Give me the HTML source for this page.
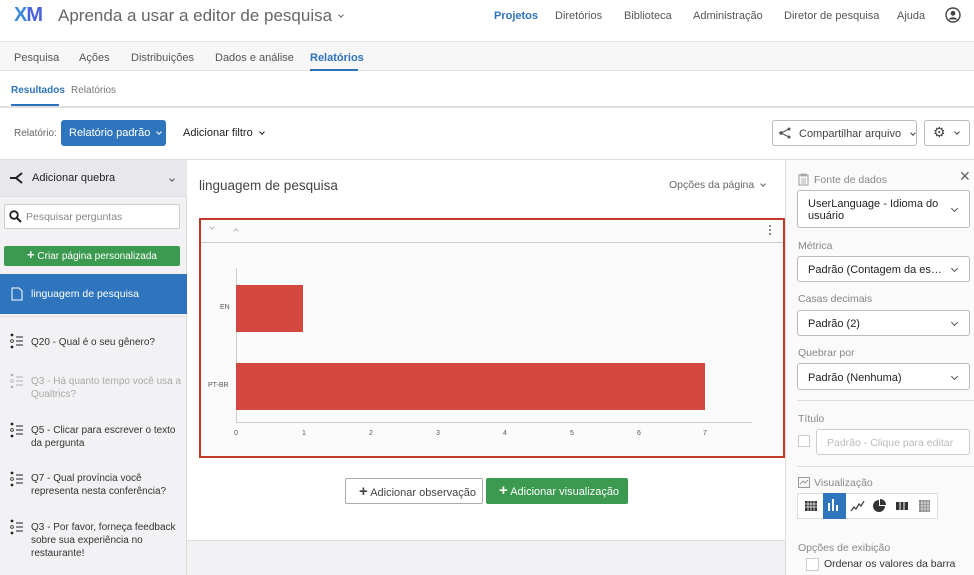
<!DOCTYPE html>
<html><head><meta charset="utf-8"><style>
*{box-sizing:border-box;margin:0;padding:0}
body{width:974px;height:575px;overflow:hidden;position:relative;background:#fff;font-family:"Liberation Sans",sans-serif;color:#333}
.a{position:absolute;white-space:nowrap}
.cv{display:inline-block;width:5px;height:5px;border-right:1px solid currentColor;border-bottom:1px solid currentColor;transform:rotate(45deg);margin:0 2px 3px 7px;vertical-align:middle}
.sel{position:absolute;left:797px;width:173px;border:1px solid #bbb;border-radius:3px;background:#fff;font-size:11px;color:#222;padding:0 10px;white-space:nowrap;overflow:hidden}
.chev{position:absolute;right:12px;width:5px;height:5px;border-right:1px solid #555;border-bottom:1px solid #555;transform:rotate(45deg)}
.lbl{position:absolute;left:798px;font-size:10.5px;color:#888}
.qi{position:absolute;left:10px;width:14px;height:18px}
.qt{position:absolute;left:31px;font-size:10px;line-height:13px;color:#333}
</style></head><body>
<!-- top bar -->
<div class="a" style="left:14px;top:4px;font-size:20px;font-weight:bold;letter-spacing:-1px;color:#3a8ad8">X<span style="color:#4a64e0">M</span></div>
<div class="a" style="left:58px;top:6px;font-size:17px;color:#666">Aprenda a usar a editor de pesquisa<span class="cv" style="width:4px;height:4px"></span></div>
<div class="a" style="left:494px;top:10px;font-size:11px;color:#2d73bb;font-weight:bold">Projetos</div>
<div class="a" style="left:555px;top:10px;font-size:11px;color:#555">Diretórios</div>
<div class="a" style="left:624px;top:10px;font-size:11px;color:#555">Biblioteca</div>
<div class="a" style="left:693px;top:10px;font-size:11px;color:#555">Administração</div>
<div class="a" style="left:784px;top:10px;font-size:11px;color:#555">Diretor de pesquisa</div>
<div class="a" style="left:897px;top:10px;font-size:11px;color:#555">Ajuda</div>
<svg class="a" style="left:945px;top:7px" width="16" height="16" viewBox="0 0 16 16"><circle cx="8" cy="8" r="7" fill="none" stroke="#444" stroke-width="1.4"/><circle cx="8" cy="6.3" r="2.4" fill="#444"/><path d="M3.5 12.5c1.5-3 7.5-3 9 0" fill="#444"/></svg>
<!-- tab bar -->
<div class="a" style="left:0;top:41px;width:974px;height:30px;background:#f7f7f7;border-top:1px solid #e6e6e6;border-bottom:1px solid #e3e3e3"></div>
<div class="a" style="left:14px;top:52px;font-size:11px;color:#555">Pesquisa</div>
<div class="a" style="left:79px;top:52px;font-size:11px;color:#555">Ações</div>
<div class="a" style="left:131px;top:52px;font-size:11px;color:#555">Distribuições</div>
<div class="a" style="left:215px;top:52px;font-size:11px;color:#555">Dados e análise</div>
<div class="a" style="left:310px;top:52px;font-size:11px;color:#2d73bb;font-weight:bold">Relatórios</div>
<div class="a" style="left:310px;top:69px;width:48px;height:2px;background:#2d73bb"></div>
<!-- subtabs -->
<div class="a" style="left:11px;top:85px;font-size:10px;color:#2d73bb;font-weight:bold">Resultados</div>
<div class="a" style="left:11px;top:104px;width:48px;height:2px;background:#2d73bb"></div>
<div class="a" style="left:71px;top:85px;font-size:10px;color:#777">Relatórios</div>
<div class="a" style="left:0;top:106px;width:974px;height:2px;background:#e0e0e0"></div>
<!-- toolbar -->
<div class="a" style="left:14px;top:128px;font-size:10px;color:#666">Relatório:</div>
<div class="a" style="left:61px;top:120px;width:105px;height:26px;background:#2e75bd;border-radius:3px;color:#fff;font-size:11px;padding:7px 0 0 8px">Relatório padrão<span class="cv" style="width:4px;height:4px"></span></div>
<div class="a" style="left:183px;top:127px;font-size:11px;color:#222">Adicionar filtro<span class="cv" style="width:4px;height:4px"></span></div>
<div class="a" style="left:772px;top:120px;width:145px;height:26px;border:1px solid #bbb;border-radius:3px;font-size:11px;color:#444;padding:7px 0 0 26px">Compartilhar arquivo<span class="cv" style="width:4px;height:4px;margin-left:10px"></span></div>
<svg class="a" style="left:779px;top:127px" width="12" height="12" viewBox="0 0 12 12"><circle cx="2" cy="6" r="1.8" fill="#555"/><circle cx="10" cy="2" r="1.5" fill="#555"/><circle cx="10" cy="10" r="1.5" fill="#555"/><path d="M2 6L10 2M2 6L10 10" stroke="#555"/></svg>
<div class="a" style="left:924px;top:120px;width:46px;height:26px;border:1px solid #bbb;border-radius:3px;font-size:14px;color:#444;padding:3px 0 0 8px">⚙<span class="cv" style="width:4px;height:4px;margin-left:9px"></span></div>
<div class="a" style="left:0;top:159px;width:974px;height:1px;background:#ddd"></div>
<!-- left sidebar -->
<div class="a" style="left:0;top:160px;width:187px;height:415px;background:#f2f2f5;border-right:1px solid #ddd"></div>
<div class="a" style="left:0;top:160px;width:187px;height:37px;background:#e8e8ec;border-bottom:1px solid #ddd"></div>
<svg class="a" style="left:9px;top:171px" width="16" height="14" viewBox="0 0 16 14"><path d="M1 7h6M7 7L13 2M7 7L13 12" stroke="#222" stroke-width="2" fill="none"/></svg>
<div class="a" style="left:32px;top:172px;font-size:11px;color:#222">Adicionar quebra</div>
<div class="a" style="left:163px;top:172px;color:#555"><span class="cv" style="width:4px;height:4px"></span></div>
<div class="a" style="left:4px;top:204px;width:176px;height:25px;background:#fff;border:1px solid #ccc;border-radius:2px"></div>
<svg class="a" style="left:9px;top:210px" width="13" height="13" viewBox="0 0 13 13"><circle cx="5" cy="5" r="3.8" fill="none" stroke="#222" stroke-width="1.8"/><path d="M8 8l4 4" stroke="#222" stroke-width="2"/></svg>
<div class="a" style="left:26px;top:211px;font-size:10.5px;color:#888">Pesquisar perguntas</div>
<div class="a" style="left:4px;top:246px;width:176px;height:20px;background:#3b9a4f;border-radius:2px;color:#fff;font-size:10px;text-align:center;padding-top:4px"><b style="font-size:13px;line-height:10px">+</b> Criar página personalizada</div>
<div class="a" style="left:0;top:274px;width:187px;height:40px;background:#2e75bd"></div>
<svg class="a" style="left:11px;top:287px" width="12" height="14" viewBox="0 0 12 14"><path d="M1 1h7l3 3v9H1z" fill="none" stroke="#fff"/></svg>
<div class="a" style="left:31px;top:288px;font-size:10.5px;color:#fff">linguagem de pesquisa</div>
<div class="a" style="left:0;top:316px;width:187px;height:1px;background:#ddd"></div>
<svg class="qi" style="top:333px" viewBox="0 0 14 18"><circle cx="2" cy="2" r="1.4" fill="#222"/><circle cx="2" cy="8" r="1.4" fill="none" stroke="#222" stroke-width=".8"/><circle cx="2" cy="14" r="1.4" fill="#222"/><path d="M6 4h7M6 8h7M6 12h7" stroke="#222" stroke-width=".9"/></svg>
<div class="qt" style="top:336px">Q20 - Qual é o seu gênero?</div>
<svg class="qi" style="top:373px;opacity:.3" viewBox="0 0 14 18"><circle cx="2" cy="2" r="1.4" fill="#222"/><circle cx="2" cy="8" r="1.4" fill="none" stroke="#222" stroke-width=".8"/><circle cx="2" cy="14" r="1.4" fill="#222"/><path d="M6 4h7M6 8h7M6 12h7" stroke="#222" stroke-width=".9"/></svg>
<div class="qt" style="top:375px;color:#aaa">Q3 - Há quanto tempo você usa a<br>Qualtrics?</div>
<svg class="qi" style="top:422px" viewBox="0 0 14 18"><circle cx="2" cy="2" r="1.4" fill="#222"/><circle cx="2" cy="8" r="1.4" fill="none" stroke="#222" stroke-width=".8"/><circle cx="2" cy="14" r="1.4" fill="#222"/><path d="M6 4h7M6 8h7M6 12h7" stroke="#222" stroke-width=".9"/></svg>
<div class="qt" style="top:424px">Q5 - Clicar para escrever o texto<br>da pergunta</div>
<svg class="qi" style="top:471px" viewBox="0 0 14 18"><circle cx="2" cy="2" r="1.4" fill="#222"/><circle cx="2" cy="8" r="1.4" fill="none" stroke="#222" stroke-width=".8"/><circle cx="2" cy="14" r="1.4" fill="#222"/><path d="M6 4h7M6 8h7M6 12h7" stroke="#222" stroke-width=".9"/></svg>
<div class="qt" style="top:472px">Q7 - Qual província você<br>representa nesta conferência?</div>
<svg class="qi" style="top:519px" viewBox="0 0 14 18"><circle cx="2" cy="2" r="1.4" fill="#222"/><circle cx="2" cy="8" r="1.4" fill="none" stroke="#222" stroke-width=".8"/><circle cx="2" cy="14" r="1.4" fill="#222"/><path d="M6 4h7M6 8h7M6 12h7" stroke="#222" stroke-width=".9"/></svg>
<div class="qt" style="top:521px">Q3 - Por favor, forneça feedback<br>sobre sua experiência no<br>restaurante!</div>
<!-- main -->
<div class="a" style="left:187px;top:540px;width:598px;height:35px;background:#f2f2f5;border-top:1px solid #ddd"></div>
<div class="a" style="left:199px;top:178px;font-size:13.5px;color:#444">linguagem de pesquisa</div>
<div class="a" style="left:669px;top:179px;font-size:10.5px;color:#666">Opções da página<span class="cv" style="width:4px;height:4px"></span></div>
<div class="a" style="left:199px;top:218px;width:586px;height:240px;border:2px solid #c0392b;background:#fbfbfc"></div>
<div class="a" style="left:201px;top:242px;width:582px;height:1px;background:#ccc"></div>
<div class="a" style="left:210px;top:225px;width:4px;height:4px;border-right:1px solid #bbb;border-bottom:1px solid #bbb;transform:rotate(45deg)"></div>
<div class="a" style="left:234px;top:229px;width:4px;height:4px;border-left:1px solid #bbb;border-top:1px solid #bbb;transform:rotate(45deg)"></div>
<div class="a" style="left:769px;top:225px;width:2px;height:2px;background:#888;box-shadow:0 4px #888,0 8px #888"></div>
<div class="a" style="left:236px;top:268px;width:1px;height:155px;background:#ccc"></div>
<div class="a" style="left:236px;top:422px;width:516px;height:1px;background:#ccc"></div>
<div class="a" style="left:236px;top:285px;width:67px;height:47px;background:#d4473e"></div>
<div class="a" style="left:236px;top:363px;width:469px;height:47px;background:#d4473e"></div>
<div class="a" style="left:220px;top:304px;font-size:7px;color:#555">EN</div>
<div class="a" style="left:208px;top:382px;font-size:7px;color:#555">PT-BR</div>
<div class="a" style="left:234px;top:430px;font-size:7px;color:#555">0</div>
<div class="a" style="left:302px;top:430px;font-size:7px;color:#555">1</div>
<div class="a" style="left:369px;top:430px;font-size:7px;color:#555">2</div>
<div class="a" style="left:436px;top:430px;font-size:7px;color:#555">3</div>
<div class="a" style="left:503px;top:430px;font-size:7px;color:#555">4</div>
<div class="a" style="left:570px;top:430px;font-size:7px;color:#555">5</div>
<div class="a" style="left:637px;top:430px;font-size:7px;color:#555">6</div>
<div class="a" style="left:703px;top:430px;font-size:7px;color:#555">7</div>
<div class="a" style="left:345px;top:478px;width:138px;height:26px;border:1px solid #aaa;border-radius:2px;font-size:11px;color:#444;padding:6px 0 0 13px;line-height:13px"><b style="font-size:15px">+</b> Adicionar observação</div>
<div class="a" style="left:486px;top:478px;width:142px;height:26px;background:#3b9a4f;border-radius:2px;font-size:11px;color:#fff;padding:6px 0 0 13px;line-height:13px"><b style="font-size:15px">+</b> Adicionar visualização</div>
<!-- right panel -->
<div class="a" style="left:785px;top:160px;width:189px;height:415px;background:#fafafa;border-left:1px solid #ddd"></div>
<svg class="a" style="left:798px;top:173px" width="11" height="13" viewBox="0 0 11 13"><rect x="1" y="2" width="9" height="10" fill="none" stroke="#999"/><path d="M3 1h5v2H3zM3 6h5M3 8h5M3 10h5" stroke="#999" fill="none" stroke-width=".8"/></svg>
<div class="a" style="left:814px;top:174px;font-size:10.5px;color:#888">Fonte de dados</div>
<div class="a" style="left:959px;top:168px;font-size:14px;color:#666">✕</div>
<div class="sel" style="top:190px;height:38px;padding-top:7px;line-height:12px">UserLanguage - Idioma do<br>usuário<span class="chev" style="top:15px"></span></div>
<div class="lbl" style="top:240px">Métrica</div>
<div class="sel" style="top:256px;height:26px;padding-top:7px;padding-right:22px;text-overflow:ellipsis">Padrão (Contagem da escolh...<span class="chev" style="top:9px"></span></div>
<div class="lbl" style="top:293px">Casas decimais</div>
<div class="sel" style="top:310px;height:26px;padding-top:7px">Padrão (2)<span class="chev" style="top:9px"></span></div>
<div class="lbl" style="top:347px">Quebrar por</div>
<div class="sel" style="top:363px;height:27px;padding-top:8px">Padrão (Nenhuma)<span class="chev" style="top:10px"></span></div>
<div class="a" style="left:797px;top:400px;width:177px;height:1px;background:#ddd"></div>
<div class="lbl" style="top:413px">Título</div>
<div class="a" style="left:798px;top:435px;width:12px;height:12px;border:1px solid #ccc;background:#fff"></div>
<div class="a" style="left:816px;top:429px;width:154px;height:26px;border:1px solid #ccc;border-radius:3px;background:#fff;font-size:10.5px;color:#bbb;padding:7px 0 0 10px">Padrão - Clique para editar</div>
<div class="a" style="left:797px;top:466px;width:177px;height:1px;background:#ddd"></div>
<svg class="a" style="left:798px;top:477px" width="12" height="11" viewBox="0 0 12 11"><rect x=".5" y=".5" width="11" height="10" fill="none" stroke="#999"/><path d="M2 7l3-3 2 2 3-3" stroke="#999" fill="none"/></svg>
<div class="a" style="left:814px;top:477px;font-size:10.5px;color:#888">Visualização</div>
<div class="a" style="left:797px;top:493px;width:141px;height:26px;border:1px solid #ddd;background:#fff"></div>
<div class="a" style="left:823px;top:493px;width:23px;height:26px;background:#2e75bd"></div>
<svg class="a" style="left:797px;top:493px" width="141" height="26" viewBox="0 0 141 26">
<g fill="#333"><rect x="8" y="8" width="12" height="10"/></g>
<path d="M8 11h12M8 14h12M11 8v10M14 8v10M17 8v10" stroke="#fff" stroke-width=".7"/>
<g fill="#fff"><rect x="31" y="10" width="2" height="8"/><rect x="35" y="6" width="2" height="12"/><rect x="39" y="12" width="2" height="6"/></g>
<path d="M54 18l3-4 2 2 3-5 2 2 3-5" stroke="#333" fill="none" stroke-width="1.2"/>
<path d="M82 7a6 6 0 1 0 6 6h-6z" fill="#333"/><path d="M83 6v6h6a6 6 0 0 0-6-6z" fill="#333"/>
<rect x="99" y="9" width="12" height="8" fill="#333"/><path d="M103 9v8M107 9v8" stroke="#fff"/>
<rect x="122" y="7" width="11" height="12" fill="#888"/><path d="M122 10h11M122 13h11M122 16h11M125 7v12M128 7v12M131 7v12" stroke="#fff" stroke-width=".6"/>
</svg>
<div class="lbl" style="top:542px">Opções de exibição</div>
<div class="a" style="left:806px;top:558px;width:13px;height:13px;border:1px solid #ccc;background:#fff"></div>
<div class="a" style="left:824px;top:558px;font-size:10.5px;color:#333">Ordenar os valores da barra</div>
</body></html>
